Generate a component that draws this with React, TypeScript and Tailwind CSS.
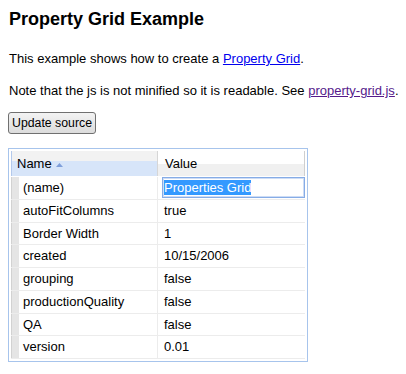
import React from 'react';

const rows: { name: string; value: string }[] = [
    { name: '(name)', value: 'Properties Grid' },
    { name: 'autoFitColumns', value: 'true' },
    { name: 'Border Width', value: '1' },
    { name: 'created', value: '10/15/2006' },
    { name: 'grouping', value: 'false' },
    { name: 'productionQuality', value: 'false' },
    { name: 'QA', value: 'false' },
    { name: 'version', value: '0.01' },
];

function PropertyGrid() {
    return (
        <div className="ml-[-1px] mt-[14px] w-[300px] border border-[#a7c4ec] p-[2px] bg-white">
            {/* header */}
            <div className="flex h-[26px] border-b border-white">
                <div className="w-[146px] flex items-center pl-[5px] border-l border-[#b3c9ec] bg-[linear-gradient(#f2f2f2_0,#f2f2f2_38%,#d7e5f9_38%)]">
                    <span>Name</span>
                    <svg width="7" height="4" viewBox="0 0 7 4" className="ml-[4px] mt-[2px]">
                        <path d="M0 4 L3.5 0 L7 4 Z" fill="#7f9fda" />
                    </svg>
                </div>
                <div className="flex-1 flex items-center pl-[7px] border-l border-[#d6d6d6] border-r border-r-[#cfcfcf] bg-[linear-gradient(#ffffff_0,#ffffff_50%,#f0f0f0_50%)]">
                    Value
                </div>
            </div>
            {/* rows */}
            {rows.map((row, i) => (
                <div key={row.name} className="flex h-[22.75px] border-b border-[#ececec]">
                    <div className="w-[8px] bg-[#e5e5e5] border-l border-[#d2d2d2]" />
                    <div className="w-[138px] flex items-center pl-[4px]">{row.name}</div>
                    {i === 0 ? (
                        <div className="flex-1 flex items-center border-l border-[#ececec] pl-[4px]">
                            <div className="flex-1 h-[21px] flex items-center pl-[1px] border border-[#86ace6] shadow-[inset_0_0_0_1px_#cddcf5] bg-white">
                                <span className="bg-[#3399ff] text-white leading-[15px]">{row.value}</span>
                            </div>
                        </div>
                    ) : (
                        <div className="flex-1 flex items-center border-l border-[#ececec] pl-[6px]">{row.value}</div>
                    )}
                </div>
            ))}
        </div>
    );
}

export default function App() {
    return (
        <div className="w-[406px] h-[374px] bg-white text-black pl-[9px] text-[13px] font-['Liberation_Sans',Arial,sans-serif] overflow-hidden">
            <h2 className="pt-[10px] text-[18px] leading-[18px] font-bold">Property Grid Example</h2>
            <p className="mt-[23px] leading-[16px] whitespace-nowrap">
                This example shows how to create a{' '}
                <a href="#" className="text-[#0000ee] underline">Property Grid</a>.
            </p>
            <p className="mt-[16px] leading-[16px] whitespace-nowrap">
                Note that the js is not minified so it is readable. See{' '}
                <a href="#" className="text-[#551a8b] underline">property-grid.js</a>.
            </p>
            <button
                className="mt-[13px] ml-[-1px] h-[22px] px-[3px] border border-[#707070] rounded-[3px] bg-linear-to-b from-[#f3f3f3] to-[#dcdcdc] text-[12.3px] leading-[14px] text-black"
            >
                Update source
            </button>
            <PropertyGrid />
        </div>
    );
}
